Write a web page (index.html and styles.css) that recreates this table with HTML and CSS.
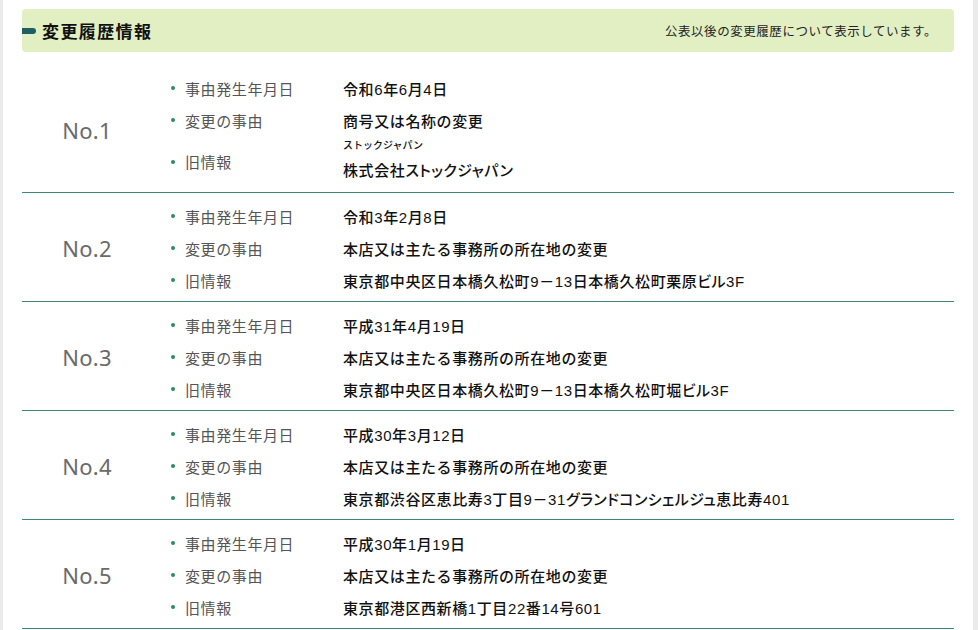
FILE: index.html
```html
<!DOCTYPE html>
<html lang="ja">
<head>
<meta charset="utf-8">
<link rel="stylesheet" href="styles.css">
</head>
<body>
<div class="page">
  <div class="head">
    <h2 class="head-title"><span class="marker"></span>変更履歴情報</h2>
    <p class="head-note">公表以後の変更履歴について表示しています。</p>
  </div>

  <div class="entry">
    <div class="no">No.1</div>
    <div class="items">
      <div class="item"><span class="label">事由発生年月日</span><span class="value">令和6年6月4日</span></div>
      <div class="item"><span class="label">変更の事由</span><span class="value">商号又は名称の変更</span></div>
      <div class="item item-tall"><span class="label">旧情報</span><span class="value"><span class="kana">ストックジャパン</span><span class="name">株式会社<span class="kata">ストックジャパン</span></span></span></div>
    </div>
  </div>

  <div class="entry">
    <div class="no">No.2</div>
    <div class="items">
      <div class="item"><span class="label">事由発生年月日</span><span class="value">令和3年2月8日</span></div>
      <div class="item"><span class="label">変更の事由</span><span class="value">本店又は主たる事務所の所在地の変更</span></div>
      <div class="item"><span class="label">旧情報</span><span class="value">東京都中央区日本橋久松町9－13日本橋久松町栗原<span class="kata">ビル</span>3F</span></div>
    </div>
  </div>

  <div class="entry">
    <div class="no">No.3</div>
    <div class="items">
      <div class="item"><span class="label">事由発生年月日</span><span class="value">平成31年4月19日</span></div>
      <div class="item"><span class="label">変更の事由</span><span class="value">本店又は主たる事務所の所在地の変更</span></div>
      <div class="item"><span class="label">旧情報</span><span class="value">東京都中央区日本橋久松町9－13日本橋久松町堀<span class="kata">ビル</span>3F</span></div>
    </div>
  </div>

  <div class="entry">
    <div class="no">No.4</div>
    <div class="items">
      <div class="item"><span class="label">事由発生年月日</span><span class="value">平成30年3月12日</span></div>
      <div class="item"><span class="label">変更の事由</span><span class="value">本店又は主たる事務所の所在地の変更</span></div>
      <div class="item"><span class="label">旧情報</span><span class="value">東京都渋谷区恵比寿3丁目9－31<span class="kata">グランドコンシェルジュ</span>恵比寿401</span></div>
    </div>
  </div>

  <div class="entry">
    <div class="no">No.5</div>
    <div class="items">
      <div class="item"><span class="label">事由発生年月日</span><span class="value">平成30年1月19日</span></div>
      <div class="item"><span class="label">変更の事由</span><span class="value">本店又は主たる事務所の所在地の変更</span></div>
      <div class="item"><span class="label">旧情報</span><span class="value">東京都港区西新橋1丁目22番14号601</span></div>
    </div>
  </div>
</div>
</body>
</html>
```
FILE: styles.css
```css
html, body {
  margin: 0;
  padding: 0;
  background: #ebebeb;
}
body {
  font-family: "Noto Sans CJK JP", "Noto Sans", sans-serif;
  color: #111;
}
.page {
  margin-left: 3px;
  width: 970px;
  min-height: 630px;
  box-sizing: border-box;
  background: #fff;
  padding: 9px 19px 0 19px;
}
.head {
  display: flex;
  align-items: center;
  justify-content: space-between;
  height: 43px;
  background: #e2efc2;
  border-radius: 4px;
  margin-bottom: 13px;
}
.head-title {
  display: flex;
  align-items: center;
  margin: 0;
  font-size: 17px;
  font-weight: 700;
  letter-spacing: 1.4px;
  color: #111;
}
.marker {
  display: inline-block;
  width: 14px;
  height: 6px;
  background: #1d5f63;
  border-radius: 0 3px 3px 0;
  margin-right: 6px;
}
.head-note {
  margin: 0 17px 0 0;
  font-size: 12.5px;
  letter-spacing: 0.55px;
  color: #222;
}
.entry {
  display: flex;
  align-items: center;
  border-bottom: 1px solid #3d8b6e;
  padding: 7px 0 5px 0;
}
.no {
  width: 130px;
  text-align: center;
  font-family: "Noto Sans", sans-serif;
  font-size: 22px;
  color: #6a6a6a;
  letter-spacing: 0.3px;
}
.items {
  flex: 1;
  display: flex;
  flex-direction: column;
}
.item {
  display: grid;
  grid-template-columns: 191px 1fr;
  align-items: center;
  min-height: 32px;
  font-size: 15px;
  letter-spacing: 0.6px;
}
.label {
  display: flex;
  align-items: center;
  padding-left: 19px;
  color: #555;
}
.label::before {
  content: "";
  width: 4px;
  height: 4px;
  border-radius: 50%;
  background: #2e8b5e;
  margin-right: 10px;
}
.value {
  font-family: "Liberation Sans", "Noto Sans CJK JP", sans-serif;
  font-weight: 500;
  color: #111;
}
.kata {
  font-family: "Noto Sans CJK JP", sans-serif;
  font-feature-settings: "palt";
  letter-spacing: 0.4px;
}
.item-tall {
  min-height: 50px;
}
.item-tall .value {
  display: flex;
  flex-direction: column;
  padding-top: 1px;
}
.kana {
  font-size: 10px;
  line-height: 17px;
  letter-spacing: 0;
}
.name {
  line-height: 32px;
}
```
